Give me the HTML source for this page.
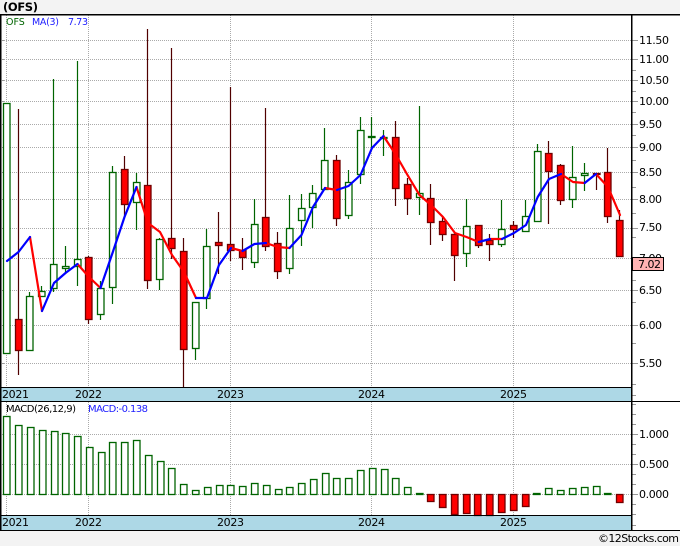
<!DOCTYPE html>
<html><head><meta charset="utf-8"><style>
html,body{margin:0;padding:0;background:#f3f3f3}
svg{display:block}
text{font-family:"DejaVu Sans",sans-serif;font-size:11px;fill:#000}
</style></head><body>
<svg width="680" height="546" viewBox="0 0 680 546" xmlns="http://www.w3.org/2000/svg">
<rect width="680" height="546" fill="#f3f3f3"/>
<rect x="0" y="14" width="680" height="517" fill="#fff"/>
<rect x="1" y="387" width="631" height="14" fill="#add8e6"/>
<rect x="1" y="515" width="631" height="15" fill="#add8e6"/>
<g stroke="#aaa" stroke-width="1" stroke-dasharray="1 1" fill="none" shape-rendering="crispEdges">
<path d="M2 40.5H632M2 59.5H632M2 80.5H632M2 101.5H632M2 124.5H632M2 147.5H632M2 172.5H632M2 199.5H632M2 228.5H632M2 258.5H632M2 290.5H632M2 325.5H632M2 363.5H632"/>
<path d="M2 434.5H632M2 464.5H632M2 494.5H632"/>
<path d="M6.5 15V387M88.5 15V387M230.5 15V387M371.5 15V387M513.5 15V387"/>
<path d="M6.5 402V515M88.5 402V515M230.5 402V515M371.5 402V515M513.5 402V515"/>
</g>
<g stroke="#999" stroke-width="1" fill="none" shape-rendering="crispEdges">
<path d="M632 40.5H638M632 59.5H638M632 80.5H638M632 101.5H638M632 124.5H638M632 147.5H638M632 172.5H638M632 199.5H638M632 228.5H638M632 290.5H638M632 325.5H638M632 363.5H638"/>
<path d="M632 70.5H636M632 91.5H636M632 112.5H636M632 135.5H636M632 160.5H636M632 187.5H636M632 213.5H636M632 237.5H636M632 280.5H636M632 302.5H636M632 343.5H636M632 384.5H636"/>
<path d="M632 434.5H638M632 464.5H638M632 494.5H638"/>
<path d="M632 395.5H636M632 404.5H636M632 414.5H636M632 424.5H636M632 444.5H636M632 454.5H636M632 474.5H636M632 484.5H636M632 504.5H636M632 514.5H636M632 525.5H636"/>
<path d="M2 40.5H4M2 59.5H4M2 80.5H4M2 101.5H4M2 124.5H4M2 147.5H4M2 172.5H4M2 199.5H4M2 228.5H4M2 258.5H4M2 290.5H4M2 325.5H4M2 363.5H4"/>
</g>
<path fill="none" stroke="#006400" stroke-width="1.2" d="M29.5 292V296M41.5 286V297M53.5 79V292M65.5 246V274M77.5 61V286M100.5 281V320M112.5 166V304M136.5 173V230M159.5 238V290M195.5 302V360M206.5 229V309M254.5 199V268M289.5 195V274M301.5 194V246M312.5 185V228M324.5 128V190M348.5 170V219M360.5 117V184M371.5 117V150M383.5 130V156M419.5 106V215M466.5 199V267M501.5 200V247M525.5 200V232M537.5 144V222M572.5 146V208M584.5 163V191"/>
<path fill="none" stroke="#500000" stroke-width="1.2" d="M18.5 109V375M88.5 256V324M124.5 156V217M147.5 29V289M171.5 48V259M183.5 238V387M218.5 212V274M230.5 87V261M242.5 238V270M265.5 108V251M277.5 232V279M336.5 155V226M395.5 121V206M407.5 178V215M430.5 184V245M442.5 217V241M454.5 232V281M478.5 225V248M489.5 234V261M513.5 221V238M548.5 141V224M560.5 164V205M596.5 173V190M607.5 148V223M619.5 210V257"/>
<g fill="#fff" stroke="#006400" stroke-width="1.3">
<rect x="3.5" y="103.5" width="6.5" height="250"/>
<rect x="26.5" y="296.5" width="6.5" height="54"/>
<rect x="38.5" y="291.5" width="6.5" height="5"/>
<rect x="50.5" y="264.5" width="6.5" height="24"/>
<rect x="62.5" y="266.5" width="6.5" height="2"/>
<rect x="74.5" y="259.5" width="6.5" height="7"/>
<rect x="97.5" y="288.5" width="6.5" height="26"/>
<rect x="109.5" y="172.5" width="6.5" height="115"/>
<rect x="133.5" y="182.5" width="6.5" height="20"/>
<rect x="156.5" y="239.5" width="6.5" height="40"/>
<rect x="192.5" y="302.5" width="6.5" height="46"/>
<rect x="203.5" y="246.5" width="6.5" height="52"/>
<rect x="251.5" y="224.5" width="6.5" height="38"/>
<rect x="286.5" y="228.5" width="6.5" height="40"/>
<rect x="298.5" y="208.5" width="6.5" height="12"/>
<rect x="309.5" y="193.5" width="6.5" height="14"/>
<rect x="321.5" y="160.5" width="6.5" height="29"/>
<rect x="345.5" y="182.5" width="6.5" height="33"/>
<rect x="357.5" y="130.5" width="6.5" height="44"/>
<rect x="368.5" y="136.5" width="6.5" height="1"/>
<rect x="380.5" y="137.5" width="6.5" height="1"/>
<rect x="416.5" y="193.5" width="6.5" height="4"/>
<rect x="463.5" y="226.5" width="6.5" height="27"/>
<rect x="498.5" y="229.5" width="6.5" height="15"/>
<rect x="522.5" y="216.5" width="6.5" height="15"/>
<rect x="534.5" y="151.5" width="6.5" height="70"/>
<rect x="569.5" y="177.5" width="6.5" height="22"/>
<rect x="581.5" y="173.5" width="6.5" height="2"/>
</g>
<g fill="#f00" stroke="#700000" stroke-width="1.3">
<rect x="15.5" y="319.5" width="6.5" height="31"/>
<rect x="85.5" y="257.5" width="6.5" height="62"/>
<rect x="121.5" y="169.5" width="6.5" height="35"/>
<rect x="144.5" y="185.5" width="6.5" height="95"/>
<rect x="168.5" y="238.5" width="6.5" height="10"/>
<rect x="180.5" y="251.5" width="6.5" height="98"/>
<rect x="215.5" y="242.5" width="6.5" height="3"/>
<rect x="227.5" y="244.5" width="6.5" height="6"/>
<rect x="239.5" y="250.5" width="6.5" height="7"/>
<rect x="262.5" y="217.5" width="6.5" height="29"/>
<rect x="274.5" y="243.5" width="6.5" height="28"/>
<rect x="333.5" y="160.5" width="6.5" height="58"/>
<rect x="392.5" y="137.5" width="6.5" height="51"/>
<rect x="404.5" y="184.5" width="6.5" height="14"/>
<rect x="427.5" y="198.5" width="6.5" height="24"/>
<rect x="439.5" y="221.5" width="6.5" height="13"/>
<rect x="451.5" y="234.5" width="6.5" height="21"/>
<rect x="475.5" y="225.5" width="6.5" height="20"/>
<rect x="486.5" y="240.5" width="6.5" height="4"/>
<rect x="510.5" y="225.5" width="6.5" height="4"/>
<rect x="545.5" y="153.5" width="6.5" height="18"/>
<rect x="557.5" y="165.5" width="6.5" height="35"/>
<rect x="593.5" y="173.5" width="6.5" height="1"/>
<rect x="604.5" y="172.5" width="6.5" height="44"/>
<rect x="616.5" y="220.5" width="6.5" height="36"/>
</g>
<g fill="none" stroke-width="2.2" stroke-linejoin="round" stroke-linecap="round">
<path stroke="#f00" d="M30 237L42 311M77.5 264L89 277L100.5 288M136.5 187L148 223L160 232L172 255L184 272L196 298M231 248L242.5 251M266 243L277.5 247L289.5 248M325 188L337 190M383.5 136L396 155L407.5 175L419.5 195L431 205L443 217L455 233L466.5 237L478.7 242M490 239L502 239M561 174L573 182L584.7 183M596 174L608 187L620 215"/>
<path stroke="#00f" d="M7 261L18.5 252L30 237M42 311L54 283L65.5 273L77.5 264M100.5 288L112.5 253L124.5 217L136.5 187M196 298L207 298L219 265L231 248M242.5 251L254.5 244L266 243M289.5 248L301.5 235L313 207L325 188M337 190L348.5 186L360.5 175L372 148L383.5 136M478.7 242L490 239M502 239L514 233L526 225L537.7 197L549 179L561 174M584.7 183L596 174"/>
</g>
<g fill="#fff" stroke="#006400" stroke-width="1.3">
<rect x="3.5" y="416.5" width="6.5" height="78"/>
<rect x="15.5" y="425.5" width="6.5" height="69"/>
<rect x="27.5" y="427.5" width="6.5" height="67"/>
<rect x="39.5" y="430.5" width="6.5" height="64"/>
<rect x="51.5" y="431.5" width="6.5" height="63"/>
<rect x="62.5" y="433.5" width="6.5" height="61"/>
<rect x="74.5" y="436.5" width="6.5" height="58"/>
<rect x="86.5" y="447.5" width="6.5" height="47"/>
<rect x="98.5" y="452.5" width="6.5" height="42"/>
<rect x="109.5" y="442.5" width="6.5" height="52"/>
<rect x="121.5" y="442.5" width="6.5" height="52"/>
<rect x="133.5" y="440.5" width="6.5" height="54"/>
<rect x="145.5" y="455.5" width="6.5" height="39"/>
<rect x="157.5" y="461.5" width="6.5" height="33"/>
<rect x="168.5" y="468.5" width="6.5" height="26"/>
<rect x="180.5" y="484.5" width="6.5" height="10"/>
<rect x="192.5" y="490.5" width="6.5" height="4"/>
<rect x="204.5" y="487.5" width="6.5" height="7"/>
<rect x="216.5" y="485.5" width="6.5" height="9"/>
<rect x="227.5" y="485.5" width="6.5" height="9"/>
<rect x="239.5" y="486.5" width="6.5" height="8"/>
<rect x="251.5" y="483.5" width="6.5" height="11"/>
<rect x="263.5" y="485.5" width="6.5" height="9"/>
<rect x="275.5" y="489.5" width="6.5" height="5"/>
<rect x="286.5" y="487.5" width="6.5" height="7"/>
<rect x="298.5" y="483.5" width="6.5" height="11"/>
<rect x="310.5" y="479.5" width="6.5" height="15"/>
<rect x="322.5" y="473.5" width="6.5" height="21"/>
<rect x="333.5" y="478.5" width="6.5" height="16"/>
<rect x="345.5" y="478.5" width="6.5" height="16"/>
<rect x="357.5" y="470.5" width="6.5" height="24"/>
<rect x="369.5" y="468.5" width="6.5" height="26"/>
<rect x="381.5" y="469.5" width="6.5" height="25"/>
<rect x="392.5" y="478.5" width="6.5" height="16"/>
<rect x="404.5" y="487.5" width="6.5" height="7"/>
<rect x="416.5" y="493.5" width="6.5" height="1"/>
<rect x="533.5" y="493.5" width="6.5" height="1"/>
<rect x="545.5" y="488.5" width="6.5" height="6"/>
<rect x="557.5" y="490.5" width="6.5" height="4"/>
<rect x="569.5" y="488.5" width="6.5" height="6"/>
<rect x="581.5" y="487.5" width="6.5" height="7"/>
<rect x="593.5" y="486.5" width="6.5" height="8"/>
<rect x="604.5" y="493.5" width="6.5" height="1"/>
</g>
<g fill="#f00" stroke="#700000" stroke-width="1.3">
<rect x="427.5" y="494.5" width="6.5" height="7"/>
<rect x="439.5" y="494.5" width="6.5" height="13"/>
<rect x="451.5" y="494.5" width="6.5" height="20"/>
<rect x="463.5" y="494.5" width="6.5" height="19"/>
<rect x="474.5" y="494.5" width="6.5" height="21"/>
<rect x="486.5" y="494.5" width="6.5" height="21"/>
<rect x="498.5" y="494.5" width="6.5" height="18"/>
<rect x="510.5" y="494.5" width="6.5" height="16"/>
<rect x="522.5" y="494.5" width="6.5" height="12"/>
<rect x="616.5" y="494.5" width="6.5" height="8"/>
</g>
<g fill="#000" shape-rendering="crispEdges">
<rect x="0" y="14" width="680" height="1.5"/>
<rect x="0" y="14" width="1.5" height="516"/>
<rect x="631" y="14" width="1.5" height="516"/>
<rect x="0" y="387" width="632" height="1"/>
<rect x="0" y="401" width="680" height="1"/>
<rect x="0" y="515" width="632" height="1"/>
<rect x="0" y="530" width="680" height="1"/>
</g>
<text x="3" y="11" style="font-size:11.5px;font-weight:bold" textLength="35">(OFS)</text>
<text x="6" y="25" style="font-size:9.5px;fill:#006400">OFS</text>
<text x="32" y="25" style="font-size:9.5px;fill:#2020ff" textLength="27">MA(3)</text>
<text x="68" y="25" style="font-size:9.5px;fill:#2020ff" textLength="20">7.73</text>
<text x="6" y="412" style="font-size:10px" textLength="70">MACD(26,12,9)</text>
<text x="88" y="412" style="font-size:10px;fill:#2020ff" textLength="60">MACD:-0.138</text>
<text x="639" y="44" textLength="30">11.50</text>
<text x="639" y="63" textLength="30">11.00</text>
<text x="639" y="84" textLength="30">10.50</text>
<text x="639" y="105" textLength="30">10.00</text>
<text x="639" y="128" textLength="23">9.50</text>
<text x="639" y="151" textLength="23">9.00</text>
<text x="639" y="176" textLength="23">8.50</text>
<text x="639" y="203" textLength="23">8.00</text>
<text x="639" y="231" textLength="23">7.50</text>
<text x="639" y="262" textLength="23">7.00</text>
<text x="639" y="294" textLength="23">6.50</text>
<text x="639" y="329" textLength="23">6.00</text>
<text x="639" y="367" textLength="23">5.50</text>
<text x="639" y="438" textLength="30">1.000</text>
<text x="639" y="468" textLength="30">0.500</text>
<text x="639" y="498" textLength="30">0.000</text>
<rect x="632.5" y="257.5" width="31" height="13" fill="#ffb3b3" stroke="#000" stroke-width="1" shape-rendering="crispEdges"/>
<text x="638" y="268" textLength="23">7.02</text>
<text x="2" y="398" textLength="27">2021</text>
<text x="75" y="398" textLength="27">2022</text>
<text x="217" y="398" textLength="27">2023</text>
<text x="358" y="398" textLength="27">2024</text>
<text x="500" y="398" textLength="27">2025</text>
<text x="2" y="526" textLength="27">2021</text>
<text x="75" y="526" textLength="27">2022</text>
<text x="217" y="526" textLength="27">2023</text>
<text x="358" y="526" textLength="27">2024</text>
<text x="500" y="526" textLength="27">2025</text>
<text x="598" y="542" textLength="81">©12Stocks.com</text>
</svg>
</body></html>
